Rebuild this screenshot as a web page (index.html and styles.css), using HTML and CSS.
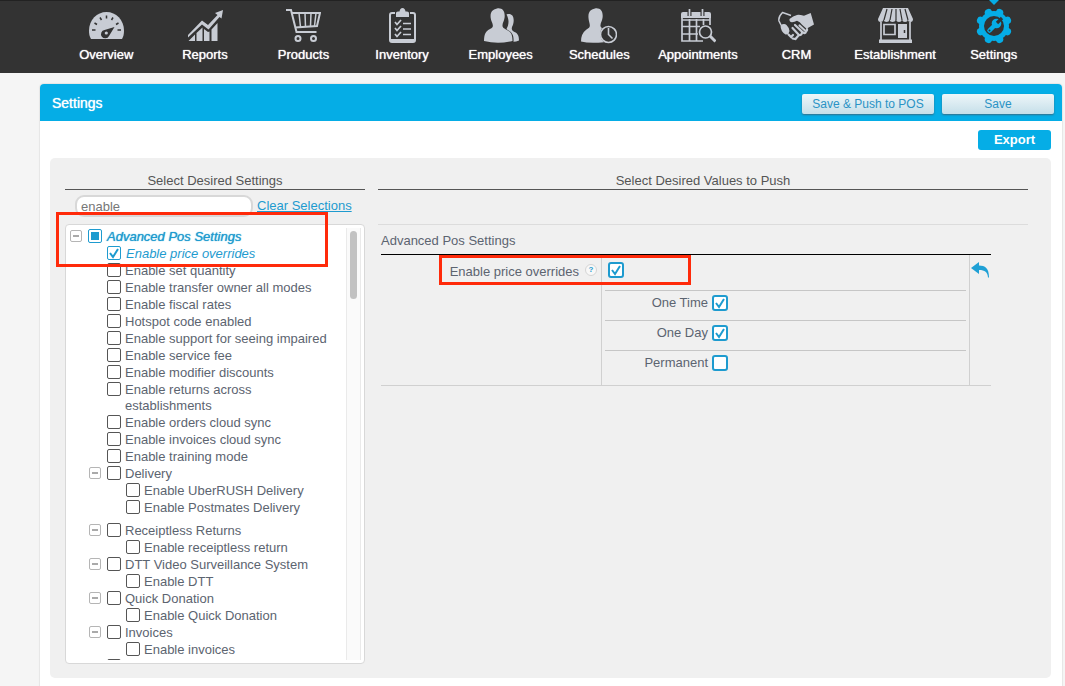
FILE: index.html
```html
<!DOCTYPE html>
<html lang="en">
<head>
<meta charset="utf-8">
<title>Settings</title>
<link rel="stylesheet" href="styles.css">
</head>
<body>
<nav class="topnav">
  <a class="nav-item" href="#">
    <svg class="nav-icon" viewBox="0 0 36 36"><path fill="currentColor" d="M3 31C1.500 28.500 1 26 1 22.500C1 12 9 4 18.500 4S36 12 36 22.500C36 26 35.500 28.500 34 31Z"/><g stroke="#333" stroke-width="1.500"><path d="M18.500 7.500v3M12 9.500l1.500 2.500M25 9.500l-1.500 2.500M6.500 15l2.500 1.500M30.500 15l-2.500 1.500M4 22h3.500M29.500 22h3.500"/></g><path fill="#333" d="M26.500 19L21 28a4.200 4.200 0 1 1-4.500-6Z"/><circle cx="18.300" cy="25" r="1.600" fill="currentColor"/></svg>
    <span>Overview</span></a>
  <a class="nav-item" href="#">
    <svg class="nav-icon" viewBox="0 0 36 36"><path fill="currentColor" d="M1 27l14-14.500 6 4.500L30.500 7 28 5l8-3-1.500 8.500L32.500 9 21.500 21.500 15 16.500 1 29.500ZM1.500 33L8 26.500V33ZM9.500 25l6-5.500V33h-6ZM17 21l4 3 1.500-.5V33H17ZM24.500 21.500l6-6.500V33h-6Z"/></svg>
    <span>Reports</span></a>
  <a class="nav-item" href="#">
    <svg class="nav-icon" viewBox="0 0 36 36" fill="none" stroke="currentColor" stroke-width="2"><path d="M1 2h5l5.500 22h20M7 5h28l-3 13L10 19.500"/><path stroke-width="1.500" d="M14 5l1.500 14M20 5l.5 14M26 5l-.5 13M31 5l-1.500 13"/><circle cx="13" cy="30.500" r="2.500"/><circle cx="28.500" cy="30.500" r="2.500"/></svg>
    <span>Products</span></a>
  <a class="nav-item" href="#">
    <svg class="nav-icon" viewBox="0 0 36 36"><path fill="none" stroke="currentColor" stroke-width="2" d="M11 5H8a2 2 0 0 0-2 2v25a2 2 0 0 0 2 2h21a2 2 0 0 0 2-2V7a2 2 0 0 0-2-2h-3"/><path fill="currentColor" d="M6 31h25v3H6ZM12 9V5q0-1.500 2-1.500h1.500Q16 0 18.500 0T21.500 3.500H23q2 0 2 1.500v4Z"/><path fill="none" stroke="currentColor" stroke-width="1.700" d="M11 14l2 2.500 4-4.500M11 20l2 2.500 4-4.500M11 26l2 2.500 4-4.500M19 15.500h8M19 21h8M19 26.500h8"/></svg>
    <span>Inventory</span></a>
  <a class="nav-item" href="#">
    <svg class="nav-icon" viewBox="0 0 36 36" fill="currentColor"><path d="M23.500 6.500c5-1.500 8 1.500 7 8-.3 2.500-1.500 4-1.700 5.500-.2 2 .7 3 2.700 4C35 25.500 36 28 36 32.500q-3 1.200-5.500 1.200C31 27 29 24.500 24 21.500c-1-1 .5-2 1-4 1-3.500.5-7.500-1.500-11Z"/><path d="M14 .5c5.500-1 8.500 3 7.500 9.500-.4 3-1.800 4.500-2 7-.2 2 .8 3 3.500 4.500 4.500 2 6.500 4 6.500 11.500Q22 34.700 15 34.700T1 33C1 25.500 3 23 7 21c2.500-1.300 3-2 2.800-4C9.500 14.500 8 13 7.700 10 7 4.500 9 1.500 14 .5Z"/></svg>
    <span>Employees</span></a>
  <a class="nav-item" href="#">
    <svg class="nav-icon" viewBox="0 0 36 36"><path fill="currentColor" d="M14 .5c5.500-1 8.500 3 7.500 9.500-.4 3-1.800 4.500-2 7-.2 1.500.3 2.300 1.500 3-3 5-2 11 2 14.200Q8 35.500 0 33.500 0 25.500 5.500 21.500C8 20 9 19.500 8.800 17 8.600 14.500 7.700 13 7.500 10 7 4.500 9 1.500 14 .5Z"/><g fill="none" stroke="currentColor" stroke-width="1.600"><circle cx="27.500" cy="26.500" r="8"/><path d="M27.500 20v6.500l4 4"/></g></svg>
    <span>Schedules</span></a>
  <a class="nav-item" href="#">
    <svg class="nav-icon" viewBox="0 0 36 36"><path fill="currentColor" d="M1 10V6q0-2 2-2h26q2 0 2 2v4Z"/><g fill="none" stroke="currentColor" stroke-width="1.700"><path d="M2 10v23h21M2 18.500h18M2 26h16M9.500 11v22M16.500 11v22M23.500 11v6M30 10v7M2 12h28"/></g><path stroke="#333" stroke-width="4" d="M9.500 2v6M22.500 2v6"/><path stroke="currentColor" stroke-width="1.700" d="M9.500 1v7M22.500 1v7"/><circle cx="25.500" cy="24" r="6" fill="#333" stroke="currentColor" stroke-width="1.700"/><path stroke="currentColor" stroke-width="3" d="M30 28l5.500 5.500"/></svg>
    <span>Appointments</span></a>
  <a class="nav-item" href="#">
    <svg class="nav-icon" viewBox="0 0 36 36"><path fill="currentColor" d="M11.500 11q-.5 3 2.500 3.200 2.500-.2 5-1.500 3 1 5 4l4.500 4L36 16.500 32.700 5 26 7.700Q21 6.500 19 7Q15 8 11.500 11ZM2.500 17q4-2 6 0 3 3 3 6-1 4-4 3.500-5-3-5-9.500Z"/><path fill="none" stroke="currentColor" stroke-width="1.500" d="M13 7.500Q9 6 4.500 4.500 0 9 1 13l2 4"/><path fill="none" stroke="currentColor" stroke-width="2.200" stroke-linecap="round" d="M17 17l8 7.500q2.500 1.500 3-1M21.500 17.500l6 5.500q2 0 1.500-2M14.500 20l6.500 7q2.500.5 3-2.500M10.500 26.500l2.500 2.500 2-2M14.500 30.500l3 .5 2.500-3"/></svg>
    <span>CRM</span></a>
  <a class="nav-item" href="#">
    <svg class="nav-icon" viewBox="0 0 36 36"><path fill="currentColor" d="M6 0h25l5 11q0 3-2.500 3T31 11.500Q30.500 14 28 14t-3-2.500Q24.500 14 22 14t-3-2.500Q18 14 15.500 14t-3-2.500Q12 14 9.500 14t-3-2.500Q6 14 3.500 14T1 11Z"/><path fill="none" stroke="#333" stroke-width="1.200" d="M10 1L7 12M15 1l-2 11M19 1v11M23 1l2 11M28 1l3 11"/><path fill="none" stroke="currentColor" stroke-width="1.700" d="M4 14v18M33 14v18M7 16.500h11v10H7Z"/><path fill="currentColor" d="M21 16h9v14h-9ZM2 31.500h33V35H2Z"/><path stroke="#333" stroke-width="1.500" d="M27.500 22v3"/></svg>
    <span>Establishment</span></a>
  <a class="nav-item active" href="#">
    <svg class="nav-icon" viewBox="0 0 36 36"><circle cx="18" cy="18" r="15" fill="currentColor"/><g stroke="currentColor" stroke-width="7.500" stroke-linecap="round"><path d="M12.500 4.700l11 26.600M23.500 4.700l-11 26.600M4.700 12.500l26.600 11M4.700 23.500l26.600-11"/></g><circle cx="18" cy="18" r="10" fill="#333"/><path stroke="currentColor" stroke-width="4.500" stroke-linecap="round" d="M13.500 22.500l7-7"/><circle cx="20.500" cy="15.500" r="4.800" fill="currentColor"/><path stroke="#333" stroke-width="3.200" d="M21 15l5-5"/><circle cx="13.500" cy="22.500" r="1" fill="#333"/></svg>
    <span>Settings</span></a>
</nav>

<main class="card">
  <header class="card-head">
    <h1>Settings</h1>
    <div class="head-actions">
      <button class="btn-light btn-push" type="button">Save &amp; Push to POS</button>
      <button class="btn-light btn-save" type="button">Save</button>
    </div>
  </header>
  <div class="toolbar"><button class="btn-export" type="button">Export</button></div>

  <div class="panel">
    <section class="picker">
      <h2>Select Desired Settings</h2>
      <div class="search-row">
        <input class="search" type="text" value="enable" aria-label="Search settings">
        <a class="clear" href="#">Clear Selections</a>
      </div>
      <div class="tree-box">
        <ul class="tree">
          <li class="row root chosen"><button class="toggle" type="button" aria-label="Collapse"></button><input class="tick partial" type="checkbox" id="s0"><label for="s0">Advanced Pos Settings</label></li>
          <li class="row leaf1 chosen light"><input class="tick" type="checkbox" id="s1" checked><label for="s1">Enable price overrides</label></li>
          <li class="row leaf1"><input class="tick" type="checkbox" id="s2"><label for="s2">Enable set quantity</label></li>
          <li class="row leaf1"><input class="tick" type="checkbox" id="s3"><label for="s3">Enable transfer owner all modes</label></li>
          <li class="row leaf1"><input class="tick" type="checkbox" id="s4"><label for="s4">Enable fiscal rates</label></li>
          <li class="row leaf1"><input class="tick" type="checkbox" id="s5"><label for="s5">Hotspot code enabled</label></li>
          <li class="row leaf1"><input class="tick" type="checkbox" id="s6"><label for="s6">Enable support for seeing impaired</label></li>
          <li class="row leaf1"><input class="tick" type="checkbox" id="s7"><label for="s7">Enable service fee</label></li>
          <li class="row leaf1"><input class="tick" type="checkbox" id="s8"><label for="s8">Enable modifier discounts</label></li>
          <li class="row leaf1"><input class="tick" type="checkbox" id="s9"><label for="s9">Enable returns across establishments</label></li>
          <li class="row leaf1"><input class="tick" type="checkbox" id="s10"><label for="s10">Enable orders cloud sync</label></li>
          <li class="row leaf1"><input class="tick" type="checkbox" id="s11"><label for="s11">Enable invoices cloud sync</label></li>
          <li class="row leaf1"><input class="tick" type="checkbox" id="s12"><label for="s12">Enable training mode</label></li>
          <li class="row group"><button class="toggle" type="button" aria-label="Collapse"></button><input class="tick" type="checkbox" id="s13"><label for="s13">Delivery</label></li>
          <li class="row leaf2"><input class="tick" type="checkbox" id="s14"><label for="s14">Enable UberRUSH Delivery</label></li>
          <li class="row leaf2 group-end"><input class="tick" type="checkbox" id="s15"><label for="s15">Enable Postmates Delivery</label></li>
          <li class="row group"><button class="toggle" type="button" aria-label="Collapse"></button><input class="tick" type="checkbox" id="s16"><label for="s16">Receiptless Returns</label></li>
          <li class="row leaf2"><input class="tick" type="checkbox" id="s17"><label for="s17">Enable receiptless return</label></li>
          <li class="row group"><button class="toggle" type="button" aria-label="Collapse"></button><input class="tick" type="checkbox" id="s18"><label for="s18">DTT Video Surveillance System</label></li>
          <li class="row leaf2"><input class="tick" type="checkbox" id="s19"><label for="s19">Enable DTT</label></li>
          <li class="row group"><button class="toggle" type="button" aria-label="Collapse"></button><input class="tick" type="checkbox" id="s20"><label for="s20">Quick Donation</label></li>
          <li class="row leaf2"><input class="tick" type="checkbox" id="s21"><label for="s21">Enable Quick Donation</label></li>
          <li class="row group"><button class="toggle" type="button" aria-label="Collapse"></button><input class="tick" type="checkbox" id="s22"><label for="s22">Invoices</label></li>
          <li class="row leaf2"><input class="tick" type="checkbox" id="s23"><label for="s23">Enable invoices</label></li>
          <li class="row leaf1"><input class="tick" type="checkbox" aria-label="More settings"></li>
        </ul>
        <div class="track"><div class="thumb"></div></div>
      </div>
      <div class="mark mark-tree"></div>
    </section>

    <section class="values">
      <h2>Select Desired Values to Push</h2>
      <div class="spacer-row"></div>
      <div class="value-group">
        <h3>Advanced Pos Settings</h3>
        <div class="setting">
          <div class="setting-name">
            <label for="v0">Enable price overrides</label>
            <button class="help" type="button" aria-label="Help">?</button>
          </div>
          <div class="setting-body">
            <div class="main-value"><input class="tick big" type="checkbox" id="v0" checked></div>
            <div class="option"><label for="v1">One Time</label><input class="tick big" type="checkbox" id="v1" checked></div>
            <div class="option"><label for="v2">One Day</label><input class="tick big" type="checkbox" id="v2" checked></div>
            <div class="option"><label for="v3">Permanent</label><input class="tick big" type="checkbox" id="v3"></div>
          </div>
          <div class="setting-undo">
            <button class="undo" type="button" aria-label="Undo"><svg viewBox="0 0 18 16"><path fill="#1fa0d5" d="M0 6L8 0v3.500C14 3.500 18 6 18 15.500H17C16.500 10 14 8 8 8v4Z"/></svg></button>
          </div>
          <div class="mark mark-value"></div>
        </div>
      </div>
    </section>
  </div>
</main>
</body>
</html>
```

FILE: styles.css
```css
* { box-sizing: border-box; }

body {
  margin: 0;
  min-height: 100vh;
  display: flex;
  flex-direction: column;
  background: #f5f5f5;
  color: #5c6470;
  font: 13px/16px "Liberation Sans", Arial, sans-serif;
}

h1, h2, h3, ul { margin: 0; padding: 0; font-weight: normal; }
button, input { margin: 0; padding: 0; font: inherit; }

/* Top navigation */
.topnav {
  display: grid;
  grid-template-columns: repeat(10, 1fr);
  padding: 0 22px 0 57px;
  background: #333;
  border-top: 1px solid #222;
}
.nav-item {
  position: relative;
  display: flex;
  flex-direction: column;
  align-items: center;
  gap: 3px;
  padding: 7px 0 10px;
  color: #c8ccd4;
  text-decoration: none;
}
.nav-item span { color: #fff; text-shadow: 0 0 1px #fff; }
.nav-icon { width: 36px; height: 36px; }
.nav-item.active { color: #05ade6; }
.nav-item.active::before {
  content: "";
  position: absolute;
  top: -1px;
  left: calc(50% - 5px);
  border: 5px solid transparent;
  border-top-color: #05ade6;
  border-bottom: 0;
}

/* Card */
.card {
  flex: 1;
  margin: 11px 3px 0 40px;
  background: #fff;
  border-radius: 4px 4px 0 0;
  box-shadow: 0 0 1px 1px #e6e6e6;
}
.card-head {
  display: flex;
  justify-content: space-between;
  align-items: center;
  height: 37px;
  padding: 0 8px 0 12px;
  background: #05ade6;
  border-radius: 4px 4px 0 0;
}
.card-head h1 { color: #fff; font-size: 14px; text-shadow: 0 0 1px #fff; }
.head-actions { display: flex; gap: 8px; padding-top: 3px; }
.btn-light {
  height: 20px;
  border: 0;
  border-radius: 2px;
  background: linear-gradient(#eef6f9, #c5dfe9);
  box-shadow: 0 1px 2px #356f88;
  color: #2a93c5;
  font-size: 12px;
}
.btn-push { width: 132px; }
.btn-save { width: 112px; }
.toolbar { display: flex; justify-content: flex-end; padding: 9px 11px 8px; }
.btn-export {
  width: 73px;
  height: 20px;
  border: 0;
  border-radius: 3px;
  background: #05ade6;
  color: #fff;
  font-weight: bold;
}

/* Panel */
.panel {
  display: flex;
  gap: 13px;
  margin: 0 11px 8px 10px;
  padding: 15px 23px 14px 15px;
  border-radius: 5px;
  background: #f0f0f0;
}
.panel h2 {
  border-bottom: 1px solid #555;
  color: #555;
  font-size: 13px;
  text-align: center;
}

.picker { position: relative; flex: 0 0 300px; }
.search-row {
  display: flex;
  gap: 4px;
  height: 34px;
  padding: 5px 0 0 10px;
}
.search {
  width: 178px;
  height: 22px;
  padding: 0 4px;
  border: 2px solid #d8d8d8;
  border-radius: 9px;
  background: #fff;
  color: #777;
  outline: none;
}
.clear { padding-top: 3px; color: #1e9bcf; }

.tree-box {
  display: flex;
  height: 440px;
  padding: 3px 3px 3px 4px;
  border: 1px solid #d8d8d8;
  border-radius: 4px;
  background: #fff;
}
.tree { flex: 1; overflow: hidden; padding-right: 12px; list-style: none; }
.track {
  flex: 0 0 15px;
  padding: 3px 3px 0;
  border: solid #eaeaea;
  border-width: 0 1px;
  background: #fafafa;
}
.thumb { height: 68px; border-radius: 4px; background: #c2c2c2; }

.row { display: flex; align-items: flex-start; padding-top: 1px; }
.row label { margin-left: 4px; }
.leaf1 { padding-left: 37px; }
.leaf2 { padding-left: 56px; }
.group { padding-left: 19px; }
.group-end { padding-bottom: 6px; }
.chosen { color: #1e9bcf; font-style: italic; }
.row.chosen label { margin-left: 5px; text-shadow: 0 0 1px #1e9bcf; }
.row.light label { text-shadow: none; }

.toggle {
  display: flex;
  flex: none;
  align-items: center;
  justify-content: center;
  width: 12px;
  height: 12px;
  margin: 1px 6px 0 0;
  border: 1px solid #b5b5b5;
  border-radius: 2px;
  background: #fff;
}
.toggle::before { content: ""; width: 6px; height: 2px; background: #aaa; }

.tick {
  appearance: none;
  display: flex;
  flex: none;
  align-items: center;
  justify-content: center;
  width: 14px;
  height: 14px;
  border: 1px solid #555;
  border-radius: 2px;
  background: #fff center / 12px 12px no-repeat;
}
.tick:checked, .tick.partial { border-color: #1e9bcf; }
.tick:checked {
  background-image: url("data:image/svg+xml,%3Csvg xmlns='http://www.w3.org/2000/svg' viewBox='0 0 12 12'%3E%3Cpath d='M2 6l3 4 5-8' fill='none' stroke='%231e9bcf' stroke-width='2'/%3E%3C/svg%3E");
}
.tick.partial::before { content: ""; width: 8px; height: 8px; background: #1e9bcf; }
.tick.big {
  width: 16px;
  height: 16px;
  border: 2px solid #1e9bcf;
  border-radius: 3px;
}

/* Values */
.values { flex: 1; }
.spacer-row { height: 35px; border-bottom: 1px solid #dcdcdc; }
.value-group { margin: 8px 37px 0 3px; }
.value-group h3 {
  padding-bottom: 5px;
  border-bottom: 1px solid #000;
  font-size: 13px;
}
.setting {
  position: relative;
  display: grid;
  grid-template-columns: 220px 1fr 21px;
  border-bottom: 1px solid #d0d0d0;
}
.setting-name {
  display: flex;
  justify-content: flex-end;
  align-items: flex-start;
  gap: 6px;
  padding: 9px 4px 0 0;
}
.help {
  width: 12px;
  height: 12px;
  border: 1px solid #d5d5d5;
  border-radius: 50%;
  background: #f8f8f8;
  color: #1e9bcf;
  font-size: 8px;
  font-weight: bold;
  line-height: 10px;
}
.setting-body {
  padding: 0 3px 5px;
  border: solid #d0d0d0;
  border-width: 0 1px;
}
.main-value { height: 35px; padding: 7px 3px; }
.option {
  display: grid;
  grid-template-columns: 103px 16px;
  gap: 4px;
  align-items: start;
  height: 30px;
  padding-top: 4px;
  border-top: 1px solid #c6c6c6;
  text-align: right;
}
.undo { display: block; width: 18px; height: 16px; margin: 7px 0 0 1px; border: 0; background: none; }
.undo svg { display: block; }

/* Highlight frames */
.mark { position: absolute; border: 3px solid #ff2a0a; pointer-events: none; }
.mark-tree { top: 39px; left: -9px; width: 272px; height: 55px; }
.mark-value { top: 0; left: 58px; width: 252px; height: 30px; }
```
